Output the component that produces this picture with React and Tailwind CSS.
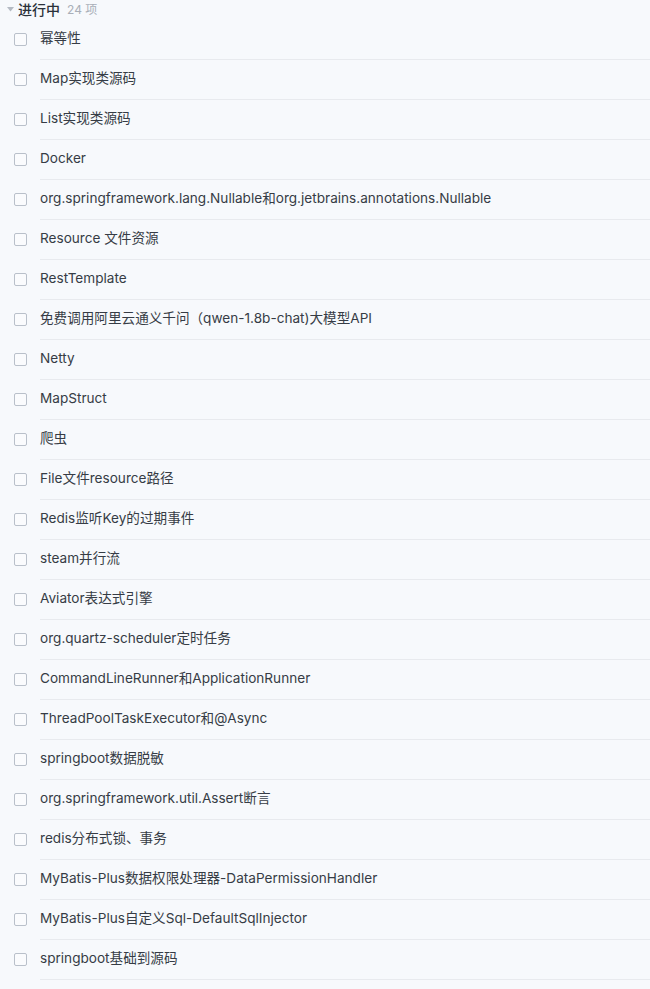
import React from 'react';

const items = [
  '幂等性',
  'Map实现类源码',
  'List实现类源码',
  'Docker',
  'org.springframework.lang.Nullable和org.jetbrains.annotations.Nullable',
  'Resource 文件资源',
  'RestTemplate',
  '免费调用阿里云通义千问（qwen-1.8b-chat)大模型API',
  'Netty',
  'MapStruct',
  '爬虫',
  'File文件resource路径',
  'Redis监听Key的过期事件',
  'steam并行流',
  'Aviator表达式引擎',
  'org.quartz-scheduler定时任务',
  'CommandLineRunner和ApplicationRunner',
  'ThreadPoolTaskExecutor和@Async',
  'springboot数据脱敏',
  'org.springframework.util.Assert断言',
  'redis分布式锁、事务',
  'MyBatis-Plus数据权限处理器-DataPermissionHandler',
  'MyBatis-Plus自定义Sql-DefaultSqlInjector',
  'springboot基础到源码',
];

export default function App() {
  return (
    <div
      className="min-h-screen w-full bg-[#f7f9fc] text-[#363c45]"
      style={{ fontFamily: 'Inter, "Noto Sans CJK SC", sans-serif' }}
    >
      <div className="flex h-5 items-center pb-[1px]">
        <div className="flex w-[18px] justify-center pl-[2px]">
          <svg width="7" height="5" viewBox="0 0 7 5">
            <path d="M0 0 L7 0 L3.5 4.5 Z" fill="#b4bac3" />
          </svg>
        </div>
        <span className="text-[14px] font-medium text-[#2b313a]">进行中</span>
        <span className="ml-[7px] text-[12px] text-[#a9afb8]">24 项</span>
      </div>

      {items.map((title) => (
        <div key={title} className="flex h-10 items-stretch">
          <div className="flex w-10 shrink-0 items-center pb-[1px] pl-[14px]">
            <div className="h-[13px] w-[13px] rounded-[2px] border border-[#b9c0ca] bg-white/40" />
          </div>
          <div className="flex flex-1 items-center border-b border-[#e8eaee] pb-[1px] text-[13.6px] leading-none">
            {title}
          </div>
        </div>
      ))}
    </div>
  );
}
